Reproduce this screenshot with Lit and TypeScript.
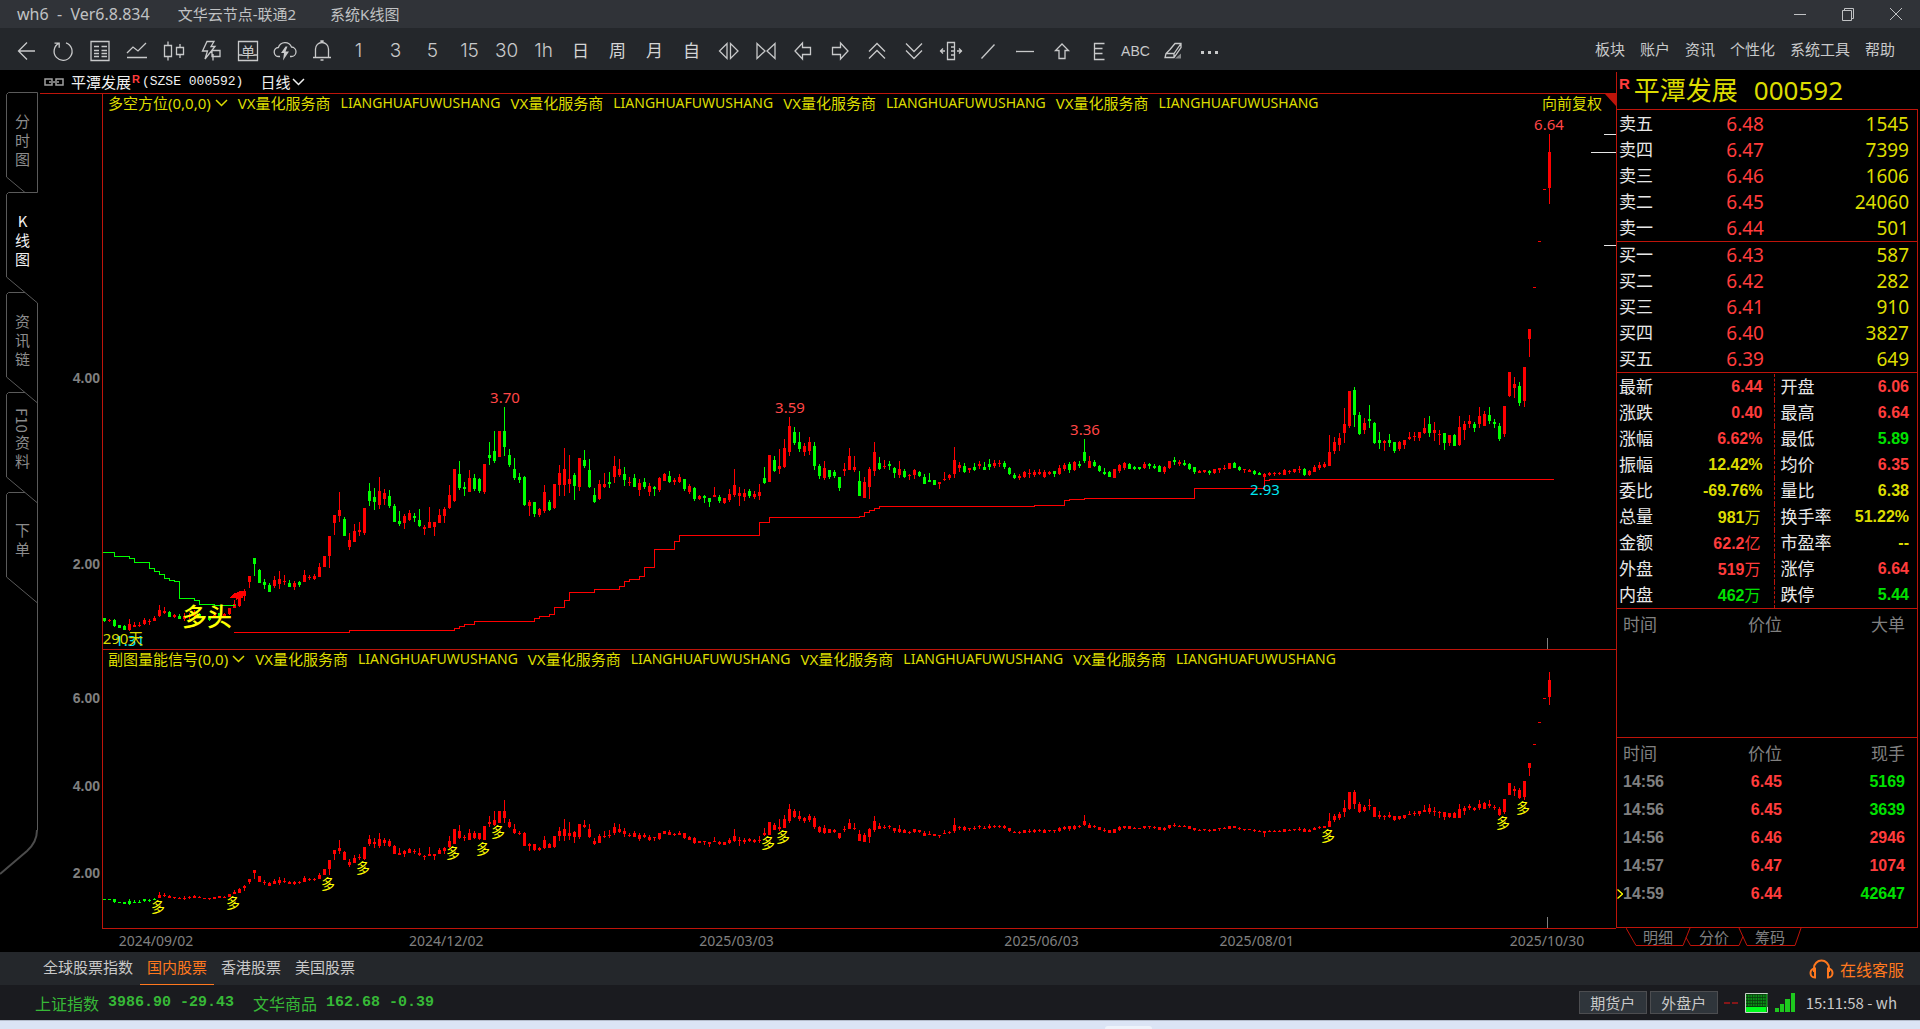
import { LitElement, html, svg, css } from "lit";
import { customElement } from "lit/decorators.js";
import { classMap } from "lit/directives/class-map.js";

/* Daily candles: colour, then high, body top, body bottom and low.
   Values are levels on the main price scale: 134 is 6.64, larger is cheaper. */
const CANDLES = `
g618,618,621,622 r619,620,621,622 g619,620,626,627 g625,625,628,628 g625,626,630,630 r619,624,630,631 r622,625,627,627 r622,625,626,627 r618,620,624,625 r619,621,622,625
r616,618,621,621 r605,610,616,617 r607,611,613,614 g611,612,617,617 r614,615,617,618 g614,616,619,619 r613,616,619,621 r613,615,617,619 r610,613,616,617 g613,614,617,617
g616,616,617,618 g616,616,620,621 r614,615,618,618 g613,613,616,617 r613,614,617,617 r608,608,614,615 r600,604,608,608 r595,597,606,607 r589,591,596,601 r576,576,582,588
g558,558,564,576 g569,570,583,583 g579,582,585,589 g583,585,592,592 r576,580,586,588 r571,579,584,589 r575,581,582,585 g580,583,587,587 r581,583,587,590 g581,582,585,587
r570,575,582,582 r575,577,578,580 r574,576,579,580 r563,567,577,577 r556,556,567,567 r536,536,556,568 r515,515,523,535 r492,510,516,522 g517,519,536,536 r533,540,547,550
r524,531,542,542 r522,530,532,536 r508,508,533,535 g483,491,501,506 g488,497,502,510 r477,491,505,509 r489,493,499,505 g490,496,506,508 g504,506,522,522 g511,521,524,526
r514,516,523,529 r510,513,520,521 g513,516,518,522 g509,520,526,527 r525,527,529,535 r507,522,528,528 r522,522,527,536 r509,515,523,523 r507,509,516,523 r485,495,508,509
r469,469,501,502 g461,474,488,490 g482,487,489,496 r470,478,492,492 g474,478,489,491 g478,479,491,493 r464,464,492,494 g442,455,458,465 g431,451,461,463 r431,431,457,457
g407,431,447,456 g449,455,465,467 g458,469,478,480 g473,477,480,483 g476,477,505,506 r500,502,506,516 g502,502,514,517 r508,509,515,517 r485,492,511,513 g500,502,510,511
r484,484,508,509 r465,473,485,496 r448,469,485,496 r455,479,484,493 g473,475,486,500 r458,458,487,491 g450,460,466,468 g459,470,487,488 g488,495,502,503 r480,484,499,500
r473,484,487,488 g472,482,484,488 r456,466,477,483 r459,469,475,477 g467,474,480,486 r477,482,483,486 g474,478,487,487 r479,483,490,496 g478,482,487,489 r483,486,492,496
g486,487,489,496 r477,478,490,492 r473,474,481,481 g471,476,482,483 r478,480,482,485 r474,477,482,483 g479,479,489,491 r484,486,492,494 g487,488,499,501 r495,496,499,500
g495,496,498,503 g498,498,502,507 r487,495,497,497 g495,497,501,503 r498,498,503,504 r489,494,500,502 r469,485,495,497 r487,493,496,506 r489,493,497,501 g489,491,496,498
r491,494,497,499 r484,492,496,500 g467,478,483,484 r455,455,482,482 g456,460,471,472 r449,466,469,474 r439,448,467,468 r417,426,452,456 g427,432,443,445 g432,442,449,452
r443,446,452,456 r437,442,451,455 g442,446,466,470 g464,466,476,479 r461,468,478,480 g470,470,477,479 g470,472,476,478 g477,477,488,491 r463,469,471,476 r448,456,470,470
r456,467,470,472 g471,481,496,496 r477,482,498,498 r467,469,487,499 r442,452,471,476 g457,463,469,470 r460,466,467,469 g461,464,466,470 g467,468,473,478 r461,469,475,478
g469,471,477,478 r474,475,476,480 r469,470,475,479 g471,472,476,477 g474,477,484,484 g473,480,482,482 g480,480,485,485 r482,482,484,489 r472,479,480,481 r474,475,478,480
r447,460,474,478 r462,465,468,472 g463,466,472,473 r468,468,470,473 g463,467,470,471 r461,464,466,469 g462,467,470,470 g459,464,467,470 r460,463,466,468 r460,463,464,467
g461,463,467,469 g467,468,474,475 g473,475,478,479 r474,476,478,480 r471,472,477,478 r469,473,474,478 r470,472,475,477 r469,472,474,475 r470,472,477,478 r471,472,474,475
g471,471,474,477 r465,468,474,475 r463,465,469,471 g462,464,470,473 r461,462,470,471 g461,464,466,468 g439,452,461,463 r456,461,468,468 g460,462,466,467 g465,466,471,472
g468,472,474,475 g471,472,477,477 r469,469,478,478 r464,465,471,473 r462,463,468,470 g463,464,469,469 g466,467,469,470 g467,467,469,470 r462,464,468,469 g463,464,466,469
g464,466,468,469 g465,466,472,472 r466,467,472,474 r461,461,468,469 g457,460,462,465 r460,462,464,466 g460,463,465,466 g463,464,469,470 g467,467,472,474 r470,471,473,473
r470,470,472,473 g470,471,473,475 r469,469,473,474 r468,468,470,473 r465,468,469,470 r463,463,469,469 g462,463,468,468 g466,467,470,471 r469,469,470,473 r469,470,472,472
g470,471,474,475 g472,473,475,475 r473,474,477,487 r472,473,475,476 r472,473,474,476 r472,473,474,475 r469,470,475,475 r470,471,472,474 r469,469,472,473 r466,469,470,473
g468,469,475,476 r470,471,475,476 r465,467,472,472 r462,465,468,470 r462,464,467,468 r435,452,466,466 r437,442,451,454 r433,438,445,451 r408,424,433,443 r391,391,426,428
g387,390,415,427 g412,415,434,435 r418,423,430,434 g405,419,421,428 g422,423,443,444 g432,440,443,449 r440,441,443,451 g434,440,443,447 g442,442,451,453 r441,442,449,451
r440,440,445,449 r432,437,439,440 r432,436,437,441 r432,432,438,441 r418,428,433,434 g416,424,433,437 r422,430,433,441 r430,434,435,445 g433,433,443,450 r435,435,443,446
g434,435,446,446 r416,427,445,446 r421,424,430,440 r415,421,424,428 g422,424,428,432 r407,416,424,428 r411,414,426,426 g407,415,421,424 g419,422,424,428 g423,426,439,441
r406,406,434,437 r372,372,396,397 r377,384,388,398 g382,386,403,406 r367,367,401,407 r329,329,339,357 r287,287,288,288 r241,241,242,242 r189,189,190,190 r134,152,188,204
`
  .trim()
  .split(/\s+/)
  .map((row) => {
    const [high, top, bottom, low] = row.slice(1).split(",").map(Number);
    return { up: row[0] === "r", high, top, bottom, low };
  });

/* Stepped trend lines: each pair is a level and the x where that level ends. */
const SUPPORT: [number, number][] = [
  [632, 349], [630, 454], [628, 459], [626, 464], [624, 474], [621, 534], [618, 539], [616, 549], [614, 554],
  [607, 564], [600, 569], [592, 594], [589, 619], [586, 624], [581, 629], [579, 639], [576, 644], [567, 654],
  [549, 674], [541, 679], [535, 759], [522, 769], [517, 859], [516, 864], [512, 869], [510, 874], [508, 879],
  [506, 1034], [505, 1064], [500, 1069], [499, 1084], [498, 1194], [488, 1264], [480, 1269], [479, 1553],
];
const RESISTANCE: [number, number][] = [
  [552, 114], [556, 129], [558, 134], [562, 149], [568, 154], [571, 159], [574, 164], [578, 169], [580, 174],
  [581, 179], [598, 194], [600, 199], [604, 214], [605, 234],
];
const steps = (x: number, parts: [number, number][]) =>
  `M${x} ${parts[0][0]}.5` + parts.map(([y, end]) => `V${y}.5H${end}.5`).join("");

const MAIN = { x: 103, y: 94, w: 1513, h: 555 };
const SUB = { x: 103, y: 650, w: 1513, h: 278 };
const subLevel = (v: number) => Math.round(672 + (v - 134) * 0.468);
const at = (box: typeof MAIN, x: number, y: number) =>
  `left:${((x - box.x) / box.w) * 100}%;top:${((y - box.y) / box.h) * 100}%`;

const SIGNALS: [number, number][] = [
  [158, 907], [233, 903], [328, 884], [363, 868], [453, 853], [483, 849],
  [498, 832], [768, 843], [783, 837], [1328, 836], [1503, 823], [1523, 808],
];
const DATES: [string, number][] = [
  ["2024/09/02", 157], ["2024/12/02", 447], ["2025/03/03", 737],
  ["2025/06/03", 1042], ["2025/08/01", 1257], ["2025/10/30", 1547],
];

const ico = (body: unknown) => html`<svg class="ico" width="24" height="24" viewBox="0 0 24 24" aria-hidden="true">${body}</svg>`;
const TOOLS: { name: string; icon?: unknown; text?: string }[] = [
  { name: "返回", icon: svg`<path d="M13 3.5 4.5 12l8.5 8.500M4.500 12H21"/>` },
  { name: "刷新", icon: svg`<path d="M15 3.800a9 9 0 1 1-7.200.600M3.500 4.200h4.700v4.600"/>` },
  { name: "报价", icon: svg`<path d="M3 2.500h18v19H3zM6 7.500h5M13.500 7.500H19M6 11.500h5M13.500 11.500H19M6 14.500h5M13.500 14.500H19M6 17.500h5M13.500 17.500H19"/>` },
  { name: "分时", icon: svg`<path d="m2 14 6-6 5 4 8-8M2 18.500h20"/>` },
  { name: "K线", icon: svg`<path d="M2.500 6.500h7v11h-7zM6 2.500v4M6 17.500v4M14.500 8.500h7v7h-7zM18 5v3.500M18 15.500V19"/>` },
  { name: "闪电下单", icon: svg`<path d="M8 2.500h7l-3 5h4L6 20l2.500-8H3.500zM13 11.500h8v6h-8zM14 15v6.500"/>` },
  { name: "下单", icon: svg`<path d="M2.500 2.500h19v19h-19zM2.500 16h4M17.500 16h4"/><text class="ico-t" x="12" y="17.500" text-anchor="middle">单</text>` },
  { name: "云端", icon: svg`<path d="M7 17.500H6a4.500 4.500 0 0 1-.6-9A7 7 0 0 1 18.500 8 4.700 4.700 0 0 1 18 17.500h-1"/><path class="solid" d="M12.500 7.500 8 14h3l-1 7.500 6-9h-3.500l2-5z"/>` },
  { name: "预警", icon: svg`<path d="M5.500 18V10a6.500 6.500 0 0 1 13 0v8M3 18.500h18M11 3.500v-1.500h2v1.500M10.500 21h3"/>` },
  { name: "1分钟", text: "1" }, { name: "3分钟", text: "3" }, { name: "5分钟", text: "5" }, { name: "15分钟", text: "15" },
  { name: "30分钟", text: "30" }, { name: "1小时", text: "1h" }, { name: "日线", text: "日" }, { name: "周线", text: "周" },
  { name: "月线", text: "月" }, { name: "自定义", text: "自" },
  { name: "放大", icon: svg`<path d="M10 4.500v15L2.500 12zM13.500 4.500v15L21 12z"/>` },
  { name: "缩小", icon: svg`<path d="M3 4.500v15l8-7.500zM21 4.500v15L13 12z"/>` },
  { name: "左移", icon: svg`<path d="M11.500 4 4 12l7.500 8v-4.500h8v-7h-8z"/>` },
  { name: "右移", icon: svg`<path d="M12.500 4l7.500 8-7.500 8v-4.500h-8v-7h8z"/>` },
  { name: "上移", icon: svg`<path d="m4 12.500 8-8 8 8M4 19.500l8-8 8 8"/>` },
  { name: "下移", icon: svg`<path d="m4 4.500 8 8 8-8M4 11.500l8 8 8-8"/>` },
  { name: "区间", icon: svg`<path d="M8.500 3.500h7v17h-7zM12 8h3M12 12h3M12 16h3M1 12h5M4 9.500 1.500 12 4 14.500M23 12h-5M20 9.500l2.500 2.500-2.500 2.500"/>` },
  { name: "斜线", icon: svg`<path d="M5.500 19.500 18.500 5.500"/>` },
  { name: "水平线", icon: svg`<path d="M3 12.500h18"/>` },
  { name: "箭头", icon: svg`<path d="M12 5 5.500 11.500H9v8h6v-8h3.500z"/>` },
  { name: "黄金分割", icon: svg`<path d="M17.500 4.500h-10v16h10M7.500 9.500h8M7.500 14.500h8"/>` },
  { name: "文字", text: "ABC" },
  { name: "擦除", icon: svg`<path d="M9 10.500 14 4.500h6v4l-7 10H4l1-4zM5 14.500h8l7-10M13 14.500v4"/><path class="solid dim" d="M14 19.500h6v-5z"/>` },
  { name: "更多", icon: svg`<path class="solid" d="M3 12h3v3H3zM10 12h3v3h-3zM17 12h3v3h-3z"/>` },
];

const ASKS = [["卖五", "6.48", "1545"], ["卖四", "6.47", "7399"], ["卖三", "6.46", "1606"], ["卖二", "6.45", "24060"], ["卖一", "6.44", "501"]];
const BIDS = [["买一", "6.43", "587"], ["买二", "6.42", "282"], ["买三", "6.41", "910"], ["买四", "6.40", "3827"], ["买五", "6.39", "649"]];
const STATS = [
  ["最新", "6.44", "r", "开盘", "6.06", "r"],
  ["涨跌", "0.40", "r", "最高", "6.64", "r"],
  ["涨幅", "6.62%", "r", "最低", "5.89", "g"],
  ["振幅", "12.42%", "y", "均价", "6.35", "r"],
  ["委比", "-69.76%", "y", "量比", "6.38", "y"],
  ["总量", "981万", "y", "换手率", "51.22%", "y"],
  ["金额", "62.2亿", "r", "市盈率", "--", "y"],
  ["外盘", "519万", "r", "涨停", "6.64", "r"],
  ["内盘", "462万", "g", "跌停", "5.44", "g"],
];
const TRADES = [
  ["14:56", "6.45", "5169", "g"],
  ["14:56", "6.45", "3639", "g"],
  ["14:56", "6.46", "2946", "r"],
  ["14:57", "6.47", "1074", "r"],
  ["14:59", "6.44", "42647", "g"],
];

const chevron = html`<svg width="13" height="8" viewBox="0 0 13 8" aria-hidden="true"><path d="m1 1 5.500 5.500L12 1" fill="none" stroke="currentColor" stroke-width="1.500"/></svg>`;

@customElement("app-titlebar")
export class AppTitlebar extends LitElement {
  static styles = css`
    :host { display: flex; align-items: center; height: 28px; background: #303338; color: #c0c2c4; padding-left: 17px;
      font: 15px/20px "Noto Sans", "Noto Sans CJK SC", sans-serif; }
    .name { white-space: pre; margin-right: 28px; font-size: 16px; }
    .item { margin-right: 34px; }
    .controls { margin-left: auto; display: flex; }
    button { width: 48px; height: 28px; padding: 0; border: 0; background: none; color: inherit; display: grid; place-items: center; }
    svg { fill: none; stroke: currentColor; display: block; }
  `;
  render() {
    const win = (label: string, d: string) => html`<button aria-label=${label}><svg width="14" height="14" viewBox="0 0 14 14"><path d=${d}/></svg></button>`;
    return html`
      <span class="name">wh6  -  Ver6.8.834</span><span class="item">文华云节点-联通2</span><span class="item">系统K线图</span>
      <div class="controls">
        ${win("最小化", "M1 7.500h12")}${win("还原", "M1.500 3.500h9v10h-9zM3.500 3.500v-2h9v10h-2")}${win("关闭", "M1 1l12 12M13 1 1 13")}
      </div>`;
  }
}

@customElement("app-toolbar")
export class AppToolbar extends LitElement {
  static styles = css`
    :host { display: flex; align-items: center; height: 42px; background: #24272b; color: #c8c9ca; padding: 0 17px 0 7px;
      font: 15px/20px "Noto Sans CJK SC", sans-serif; }
    .tools { display: flex; padding-top: 4px; }
    .tool { width: 37px; height: 36px; padding: 0; border: 0; background: none; color: inherit; display: grid; place-items: center;
      font: 300 19px/24px Inter, "Noto Sans CJK SC", sans-serif; }
    .zh { font-size: 17px; font-weight: 400; color: #d4d5d6; }
    .abc { font: 14px/24px "Liberation Sans", sans-serif; }
    .ico { display: block; fill: none; stroke: currentColor; stroke-width: 1.3; }
    .ico-t { fill: currentColor; stroke: none; font: 14px "Noto Sans CJK SC", sans-serif; }
    .solid { fill: currentColor; stroke: none; }
    .dim { opacity: 0.6; }
    nav { margin-left: auto; display: flex; }
    a { color: inherit; text-decoration: none; padding: 0 8px 0 7px; }
  `;
  render() {
    return html`
      <div class="tools" role="toolbar">
        ${TOOLS.map((t) => html`<button class=${classMap({ tool: true, zh: /[日周月自]/.test(t.text ?? ""), abc: t.text === "ABC" })} aria-label=${t.name}>${t.text ?? ico(t.icon)}</button>`)}
      </div>
      <nav>${["板块", "账户", "资讯", "个性化", "系统工具", "帮助"].map((m) => html`<a href="#">${m}</a>`)}</nav>`;
  }
}

@customElement("view-tabs")
export class ViewTabs extends LitElement {
  static styles = css`
    :host { display: grid; width: 40px; align-content: start; }
    .frame, .tabs { grid-area: 1 / 1; }
    .frame { fill: none; stroke: #5a5a5a; stroke-width: 1; display: block; }
    .edge { stroke-width: 2; stroke: #4c4c4c; }
    .tabs { display: flex; flex-direction: column; padding: 22px 0 0 7px; }
    button { width: 31px; height: 100px; padding: 0 0 6px; border: 0; background: none; color: #8c8c8c; display: flex; flex-direction: column;
      align-items: center; justify-content: center; font: 15px/19px "Noto Sans CJK SC", sans-serif; }
    .on { color: #f0f0f0; }
    .turned { writing-mode: vertical-rl; }
  `;
  render() {
    const tabs = [["分", "时", "图"], ["K", "线", "图"], ["资", "讯", "链"], ["F10", "资", "料"], ["下", "单"]];
    return html`
      <svg class="frame" width="40" height="810" viewBox="0 70 40 810" aria-hidden="true">
        <path d="M25 192.500 6.500 177V94.500l2-2H37.500v100H8.500l-2 2V277L37.500 303V830"/>
        <path d="M25 292.500H8.500l-2 2V377l31 26M25 392.500H8.500l-2 2V477l31 26M25 492.500H8.500l-2 2V577l31 26"/>
        <path class="edge" d="M37 830q0 12-10 21L0 874"/>
      </svg>
      <div class="tabs">
        ${tabs.map((t, i) => html`<button class=${classMap({ on: i === 1 })}>${t.map((c) => html`<span class=${classMap({ turned: c === "F10" })}>${c}</span>`)}</button>`)}
      </div>`;
  }
}

@customElement("price-chart")
export class PriceChart extends LitElement {
  static styles = css`
    :host { display: grid; grid-template-columns: 62px minmax(0, 1fr); grid-template-rows: 23px minmax(0, 556fr) minmax(0, 279fr) 24px;
      font: 14px/18px "Noto Sans", "Noto Sans CJK SC", sans-serif; color: #dcdc00; }
    .head { grid-column: 1 / 3; display: flex; align-items: center; color: #f0f0f0; padding-left: 4px; font: 15px/22px "Noto Sans CJK SC", sans-serif; }
    .link { margin-right: 7px; }
    .head sup { color: #ff3c3c; font: bold 11px/12px "Liberation Sans", sans-serif; align-self: flex-start; padding-top: 3px; margin: 0 2px 0 1px; }
    .code { font: 13px/22px "Liberation Mono", monospace; margin-right: 17px; }
    .period { display: flex; align-items: center; gap: 2px; padding: 0; border: 0; background: none; color: inherit; font: inherit; }
    .scale, .pane { position: relative; border-top: 1px solid #be140a; }
    .sub.scale { border-top-color: transparent; }
    .pane { border-left: 1px solid #be140a; }
    .plot { position: absolute; inset: 0; width: 100%; height: 100%; display: block; shape-rendering: crispEdges; }
    .tick { position: absolute; right: 2px; margin-top: -9px; color: #808080; font: bold 14px/18px "Liberation Sans", sans-serif; }
    .legend { position: relative; display: flex; gap: 10px; padding: 0 14px 0 5px; white-space: nowrap; font-size: 15px; }
    .legend button { display: flex; align-items: center; gap: 4px; padding: 0; border: 0; background: none; color: inherit; font: inherit; }
    .latin { font-size: 14px; }
    .adjust { margin-left: auto; }
    .corner { position: absolute; right: 0; top: 0; fill: #be140a; display: block; }
    .mark { position: absolute; translate: -50% -50%; font-size: 15px; line-height: 16px; white-space: nowrap; }
    .hi { color: #ff4646; }
    .lo { color: #00e6f0; }
    .trend { color: #ffff00; font: 500 25px/28px "Noto Sans CJK SC", sans-serif; }
    .sig { color: #ffff00; font-size: 14px; }
    .r { fill: #ff0000; }
    .g { fill: #00ff00; }
    .w { fill: #e6e6e6; }
    .d { fill: #808080; }
    .up-line { fill: none; stroke: #ff0000; }
    .down-line { fill: none; stroke: #00ff00; }
    .dates { position: relative; border-top: 1px solid #be140a; color: #808080; }
    .date { position: absolute; top: 3px; translate: -50% 0; }
  `;
  private legend(title: string, extra: unknown = "") {
    const ad = html`<span>VX量化服务商</span><span class="latin">LIANGHUAFUWUSHANG</span>`;
    return html`<div class="legend"><button>${title}${chevron}</button>${ad}${ad}${ad}${ad}${extra}</div>`;
  }
  private bars(level: (v: number) => number, up: (i: number) => boolean) {
    return CANDLES.map((c, i) => {
      const x = 103 + i * 5, h = level(c.high), t = level(c.top), b = level(c.bottom), l = level(c.low);
      return svg`<path class=${up(i) ? "r" : "g"} d="M${x + 1} ${h}h1V${Math.max(l, h + 1)}h-1zM${x} ${t}h3V${Math.max(b, t + 1)}h-3z"/>`;
    });
  }
  render() {
    const ticks = (box: typeof MAIN, list: [string, number][]) =>
      list.map(([t, y]) => html`<span class="tick" style="top:${((y - box.y) / box.h) * 100}%">${t}</span>`);
    return html`
      <div class="head">
        <svg class="link" width="20" height="8" viewBox="0 0 20 8" fill="none" stroke="#a0a0a0" stroke-width="1.500" aria-hidden="true"><path d="M8 3V1H1v6h7V5M12 3V1h7v6h-7V5M5 4h10"/></svg>
        <span>平潭发展</span><sup>R</sup><span class="code">(SZSE 000592)</span><button class="period">日线${chevron}</button>
      </div>
      <div class="scale">${ticks(MAIN, [["4.00", 378], ["2.00", 564]])}</div>
      <div class="pane">
        <svg class="plot" viewBox="103 94 1513 555" preserveAspectRatio="none" role="img" aria-label="K线图">
          ${this.bars((v) => v, (i) => CANDLES[i].up)}
          <path class="up-line" d=${steps(234, SUPPORT)}/>
          <path class="down-line" d=${steps(103, RESISTANCE)}/>
          <path class="r" d="M229 598l6-5 4-1v-1h6v3l-2 1v3h-5l-2 2v-2z"/>
          <path class="w" d="M1604 134h12v1h-12zM1591 152h25v1h-25zM1604 245h12v1h-12z"/>
          <path class="d" d="M1547 638h1v11h-1z"/>
        </svg>
        ${this.legend("多空方位(0,0,0)", html`<span class="adjust">向前复权</span>`)}
        <svg class="corner" width="11" height="12" viewBox="0 0 11 12" aria-hidden="true"><path d="M0 0h11v12z"/></svg>
        <span class="mark hi" style=${at(MAIN, 505, 397)}>3.70</span>
        <span class="mark hi" style=${at(MAIN, 790, 407)}>3.59</span>
        <span class="mark hi" style=${at(MAIN, 1085, 429)}>3.36</span>
        <span class="mark hi" style=${at(MAIN, 1549, 124)}>6.64</span>
        <span class="mark lo" style=${at(MAIN, 1265, 489)}>2.93</span>
        <span class="mark lo" style=${at(MAIN, 130, 640)}>1.31</span>
        <span class="mark" style=${at(MAIN, 123, 638)}>290天</span>
        <span class="mark trend" style=${at(MAIN, 207, 615)}>多头</span>
      </div>
      <div class="scale sub">${ticks(SUB, [["6.00", 698], ["4.00", 786], ["2.00", 873]])}</div>
      <div class="pane">
        <svg class="plot" viewBox="103 650 1513 278" preserveAspectRatio="none" role="img" aria-label="副图">
          ${this.bars(subLevel, (i) => i > 10)}
          <path class="d" d="M1547 917h1v11h-1z"/>
        </svg>
        ${this.legend("副图量能信号(0,0)")}
        ${SIGNALS.map(([x, y]) => html`<span class="mark sig" style=${at(SUB, x, y)}>多</span>`)}
      </div>
      <div></div>
      <div class="dates">${DATES.map(([d, x]) => html`<span class="date" style="left:${((x - 103) / 1513) * 100}%">${d}</span>`)}</div>`;
  }
}

@customElement("quote-panel")
export class QuotePanel extends LitElement {
  static styles = css`
    :host { display: flex; flex-direction: column; width: 304px; color: #e8e8e8; font: 17px/26px "Noto Sans CJK SC", sans-serif; }
    .box { flex: 1; display: flex; flex-direction: column; border-left: 1px solid #be140a; margin: 2px 2px 0 0; }
    h1 { display: flex; align-items: center; gap: 4px; height: 37px; margin: 0; padding-left: 2px; color: #dcdc00;
      font: 26px/37px "Noto Sans", "Noto Sans CJK SC", sans-serif; }
    h1 b { color: #ff3c3c; font: bold 15px/16px "Liberation Sans", sans-serif; align-self: flex-start; padding-top: 4px; }
    .num { margin-left: 12px; }
    .sec { border-top: 1px solid #be140a; border-right: 1px solid #be140a; }
    .asks, .stats { padding-top: 1px; }
    .big { height: 128px; }
    .last { flex: 1; border-bottom: 1px solid #be140a; }
    table { border-collapse: collapse; table-layout: fixed; width: 100%; }
    th, td { box-sizing: border-box; padding: 0; height: 26px; font-weight: 400; text-align: right; white-space: nowrap; line-height: 24px; }
    tbody th { text-align: left; padding: 0 0 2px 2px; }
    .bids tr:first-child > * { height: 25px; }
    .book td { font: 19px/24px "Noto Sans", sans-serif; }
    .lab { width: 60px; }
    .mid { width: 87px; }
    td:last-child { padding-right: 8px; }
    .stats td { font: bold 16px/24px "Liberation Sans", "Noto Sans CJK SC", sans-serif; }
    .unit { font-weight: 400; font-family: "Noto Sans CJK SC", sans-serif; margin-right: 2px; }
    .stats td:nth-child(2) { padding-right: 11px; border-right: 1px dashed #be140a; }
    .stats th:nth-child(3) { padding-left: 6px; }
    .c1 { width: 50px; } .c2 { width: 107px; } .c3 { width: 76px; }
    .r { color: #ff3c3c; } .g { color: #00e100; } .y { color: #dcdc00; }
    .flow th { color: #808080; }
    .flow thead th { height: 30px; }
    .flow thead th:first-child { text-align: left; padding-left: 6px; }
    .flow td, .flow tbody th { height: 28px; font: bold 16px/28px "Liberation Sans", sans-serif; }
    .flow tbody th { padding: 0; }
    .flow th:last-child, .flow td:last-child { padding-right: 12px; }
    .t { width: 76px; } .p { width: 89px; }
    .row { display: flex; align-items: center; }
    .arrow { width: 6px; height: 28px; display: block; fill: none; stroke: #ffff00; stroke-width: 1.3; }
    .tabs { height: 24px; display: grid; margin-left: 10px; }
    .tabs svg, .labels { grid-area: 1 / 1; }
    .tabs svg { display: block; fill: none; stroke: #be140a; }
    .labels { display: flex; padding-left: 4px; }
    .labels button { width: 56px; height: 17px; padding: 0; border: 0; background: none; color: #808080; font: 15px/17px "Noto Sans CJK SC", sans-serif; }
  `;
  private book(rows: string[][], extra: string) {
    return html`<div class="sec book ${extra}"><table><colgroup><col class="lab"><col class="mid"><col></colgroup><tbody>
      ${rows.map(([l, p, q]) => html`<tr><th scope="row">${l}</th><td class="r">${p}</td><td class="y">${q}</td></tr>`)}
    </tbody></table></div>`;
  }
  private val(v: string) {
    const unit = /[万亿]$/.test(v) ? v.slice(-1) : "";
    return unit ? html`${v.slice(0, -1)}<span class="unit">${unit}</span>` : v;
  }
  private flow(last: string, rows: string[][], extra: string) {
    return html`<div class="sec flow ${extra}"><table><colgroup><col class="t"><col class="p"><col></colgroup>
      <thead><tr><th scope="col">时间</th><th scope="col">价位</th><th scope="col">${last}</th></tr></thead>
      <tbody>${rows.map(([t, p, q, c], i) => html`<tr><th scope="row"><div class="row">
        <svg class="arrow" viewBox="0 0 6 28" aria-hidden="true">${i === rows.length - 1 ? svg`<path d="M.5 9.500l5 4.500-5 4.500"/>` : ""}</svg>${t}</div></th>
        <td class="r">${p}</td><td class=${c}>${q}</td></tr>`)}</tbody></table></div>`;
  }
  render() {
    return html`
      <div class="box">
        <h1><b>R</b><span>平潭发展</span><span class="num">000592</span></h1>
        ${this.book(ASKS, "asks")}${this.book(BIDS, "bids")}
        <div class="sec stats"><table><colgroup><col class="c1"><col class="c2"><col class="c3"><col></colgroup><tbody>
          ${STATS.map(([a, b, c, d, e, f]) => html`<tr><th scope="row">${a}</th><td class=${c}>${this.val(b)}</td><th scope="row">${d}</th><td class=${f}>${e}</td></tr>`)}
        </tbody></table></div>
        ${this.flow("大单", [], "big")}${this.flow("现手", TRADES, "last")}
      </div>
      <div class="tabs">
        <svg width="180" height="19" viewBox="0 0 180 19" aria-hidden="true"><path d="M0 0l10 17.500h47L64 0M60 9.500l4.500 8H113l4-9M113 0l8 17.500h48L175 0"/></svg>
        <div class="labels"><button>明细</button><button>分价</button><button>筹码</button></div>
      </div>`;
  }
}

@customElement("app-footer")
export class AppFooter extends LitElement {
  static styles = css`
    :host { display: block; font: 15px/20px "Noto Sans CJK SC", sans-serif; color: #c8c8c8; }
    .markets { display: flex; height: 33px; background: #24272b; padding: 0 16px 0 36px; }
    .market { display: flex; align-items: center; height: 33px; padding: 0 7px 3px; border: 0; border-bottom: 1px solid transparent; background: none; color: inherit; font: inherit; }
    .on { color: #ff781e; border-bottom-color: #ff781e; }
    .help { margin-left: auto; display: flex; align-items: center; gap: 6px; color: #ff781e; text-decoration: none; font-size: 16px; }
    .help svg { fill: none; stroke: currentColor; stroke-width: 2; }
    .status { display: flex; align-items: center; height: 35px; background: #1a1b1f; padding: 0 23px 0 35px; }
    .idx { display: flex; gap: 9px; margin-right: 19px; color: #37b837; font: bold 15px/20px "Liberation Mono", "Noto Sans CJK SC", monospace; }
    .idx span { font: 16px/20px "Noto Sans CJK SC", sans-serif; }
    .acct { width: 68px; height: 23px; padding: 0; margin-right: 3px; border: 1px solid #4c4d50; background: #2f353b; color: inherit; font: inherit; line-height: 20px; }
    .push { margin-left: auto; }
    .dash { color: #f01414; margin: 0 9px 0 3px; }
    .status svg { display: block; margin-right: 7px; }
    time { margin-left: 3px; }
    .desk { height: 8px; border-top: 1px solid #b4bccb; background: #dbe4f5; display: flex; justify-content: center; align-items: flex-end; }
    .pill { width: 47px; height: 3px; border-radius: 4px 4px 0 0; background: #eef3fb; margin-left: 336px; }
  `;
  render() {
    const grid = Array.from({ length: 9 }, (_, i) => i);
    return html`
      <div class="markets">
        ${["全球股票指数", "国内股票", "香港股票", "美国股票"].map((m, i) => html`<button class=${classMap({ market: true, on: i === 1 })}>${m}</button>`)}
        <a class="help" href="#"><svg width="25" height="20" viewBox="0 0 25 20" aria-hidden="true"><path d="M5 13V9a7.500 7.500 0 0 1 15 0v4M6 9.500c-6 0-6 9 0 9zM19 9.500c6 0 6 9 0 9z"/></svg>在线客服</a>
      </div>
      <div class="status">
        <div class="idx"><span>上证指数</span>3986.90<b>-29.43</b></div>
        <div class="idx"><span>文华商品</span>162.68<b>-0.39</b></div>
        <button class="acct push">期货户</button><button class="acct">外盘户</button>
        <svg class="dash" width="14" height="2" viewBox="0 0 14 2" aria-label="--"><path d="M0 1h6M8 1h6" stroke="currentColor"/></svg>
        <svg width="23" height="20" viewBox="0 0 23 20" aria-hidden="true">
          <path fill="#0a8c14" stroke="#c8d2c8" d="M.5.5h22v19H.5z"/><path fill="#00ff1e" d="M1 14h20v5H1z"/>
          ${grid.map((i) => svg`<path stroke="#0a3c0f" stroke-opacity=".8" d="M${2.5 + i * 2.5} 1v13M1 ${Math.min(1.5 + i * 3, 13.5)}h20"/>`)}
        </svg>
        <svg width="21" height="19" viewBox="0 0 21 19" fill="#1ec81e" aria-hidden="true"><path d="M0 15h4v4H0zM5 11h4v8H5zM10 6h5v13h-5zM16 0h4v19h-4z"/></svg>
        <time>15:11:58 - wh</time>
      </div>
      <div class="desk"><span class="pill"></span></div>`;
  }
}

@customElement("app-root")
export class AppRoot extends LitElement {
  static styles = css`
    :host { display: flex; flex-direction: column; min-height: 100vh; background: #000; overflow: hidden; }
    main { flex: 1; display: grid; grid-template-columns: 40px minmax(0, 1fr) 304px; }
  `;
  render() {
    return html`
      <app-titlebar></app-titlebar>
      <app-toolbar></app-toolbar>
      <main><view-tabs></view-tabs><price-chart></price-chart><quote-panel></quote-panel></main>
      <app-footer></app-footer>`;
  }
}
